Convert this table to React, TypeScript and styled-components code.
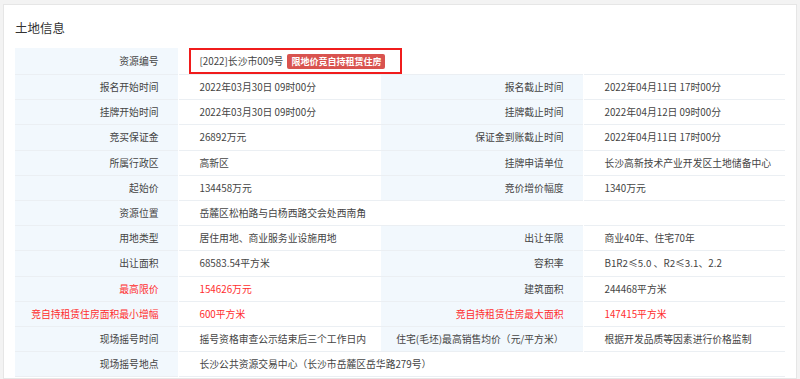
import styled, { createGlobalStyle } from 'styled-components';

const GlobalStyle = createGlobalStyle`
  html, body {
    margin: 0;
    padding: 0;
    background: #f3f3f3;
    font-family: "Noto Sans CJK SC", "Noto Sans", sans-serif;
  }
`;

const Page = styled.div`
  width: 800px;
  height: 379px;
  overflow: hidden;
  padding: 4px 3px 0 3px;
  box-sizing: border-box;
`;

const Card = styled.div`
  background: #ffffff;
  border: 1px solid #e6e6e6;
  height: 100%;
  box-sizing: border-box;
  padding: 0 8px 0 11px;
`;

const Title = styled.h3`
  margin: 0;
  height: 43px;
  line-height: 45px;
  font-size: 12.5px;
  font-weight: 400;
  color: #333;
`;

const Table = styled.table`
  width: 770px;
  border-collapse: collapse;
  table-layout: fixed;
  font-size: 9.8px;
  color: #444;
`;

const Row = styled.tr`
  height: 25.2px;
  border-bottom: 1px solid #ebeff3;
`;

const Label = styled.td<{ $red?: boolean }>`
  background: #f2f8fd;
  text-align: right;
  padding: 0 19px 0 0;
  color: ${(p) => (p.$red ? '#ff2d2d' : '#444')};
  white-space: nowrap;
  border-right: 1px solid #ffffff;
`;

const Value = styled.td<{ $red?: boolean }>`
  background: #ffffff;
  padding: 0 0 0 21px;
  color: ${(p) => (p.$red ? '#ff2d2d' : '#444')};
  white-space: nowrap;
`;

const Marked = styled.span`
  display: inline-flex;
  align-items: center;
  gap: 4px;
  height: 26px;
  box-sizing: border-box;
  margin-left: -11px;
  padding: 0 15px 0 9px;
  border: 2px solid #f01c1c;
  vertical-align: middle;
`;

const Badge = styled.span`
  background: #d9534f;
  color: #fff;
  font-weight: 700;
  font-size: 9px;
  line-height: 15px;
  padding: 0 4px;
  border-radius: 2px;
`;

type Cell = { label: string; value: string; red?: boolean };

const pairs: [Cell, Cell | null][] = [
  [{ label: '报名开始时间', value: '2022年03月30日 09时00分' }, { label: '报名截止时间', value: '2022年04月11日 17时00分' }],
  [{ label: '挂牌开始时间', value: '2022年03月30日 09时00分' }, { label: '挂牌截止时间', value: '2022年04月12日 09时00分' }],
  [{ label: '竞买保证金', value: '26892万元' }, { label: '保证金到账截止时间', value: '2022年04月11日 17时00分' }],
  [{ label: '所属行政区', value: '高新区' }, { label: '挂牌申请单位', value: '长沙高新技术产业开发区土地储备中心' }],
  [{ label: '起始价', value: '134458万元' }, { label: '竞价增价幅度', value: '1340万元' }],
  [{ label: '资源位置', value: '岳麓区松柏路与白杨西路交会处西南角' }, null],
  [{ label: '用地类型', value: '居住用地、商业服务业设施用地' }, { label: '出让年限', value: '商业40年、住宅70年' }],
  [{ label: '出让面积', value: '68583.54平方米' }, { label: '容积率', value: 'B1R2≤5.0 、R2≤3.1、2.2' }],
  [{ label: '最高限价', value: '154626万元', red: true }, { label: '建筑面积', value: '244468平方米' }],
  [
    { label: '竞自持租赁住房面积最小增幅', value: '600平方米', red: true },
    { label: '竞自持租赁住房最大面积', value: '147415平方米', red: true },
  ],
  [{ label: '现场摇号时间', value: '摇号资格审查公示结束后三个工作日内' }, { label: '住宅(毛坯)最高销售均价（元/平方米）', value: '根据开发品质等因素进行价格监制' }],
  [{ label: '现场摇号地点', value: '长沙公共资源交易中心（长沙市岳麓区岳华路279号）' }, null],
];

export default function App() {
  return (
    <Page>
      <GlobalStyle />
      <Card>
        <Title>土地信息</Title>
        <Table>
          <colgroup>
            <col style={{ width: 163 }} />
            <col style={{ width: 203 }} />
            <col style={{ width: 202 }} />
            <col style={{ width: 202 }} />
          </colgroup>
          <tbody>
            <Row>
              <Label>资源编号</Label>
              <Value colSpan={3}>
                <Marked>
                  [2022]长沙市009号
                  <Badge>限地价竞自持租赁住房</Badge>
                </Marked>
              </Value>
            </Row>
            {pairs.map(([a, b]) => (
              <Row key={a.label}>
                <Label $red={a.red}>{a.label}</Label>
                <Value $red={a.red} colSpan={b ? 1 : 3}>
                  {a.value}
                </Value>
                {b && (
                  <>
                    <Label $red={b.red}>{b.label}</Label>
                    <Value $red={b.red}>{b.value}</Value>
                  </>
                )}
              </Row>
            ))}
          </tbody>
        </Table>
      </Card>
    </Page>
  );
}
